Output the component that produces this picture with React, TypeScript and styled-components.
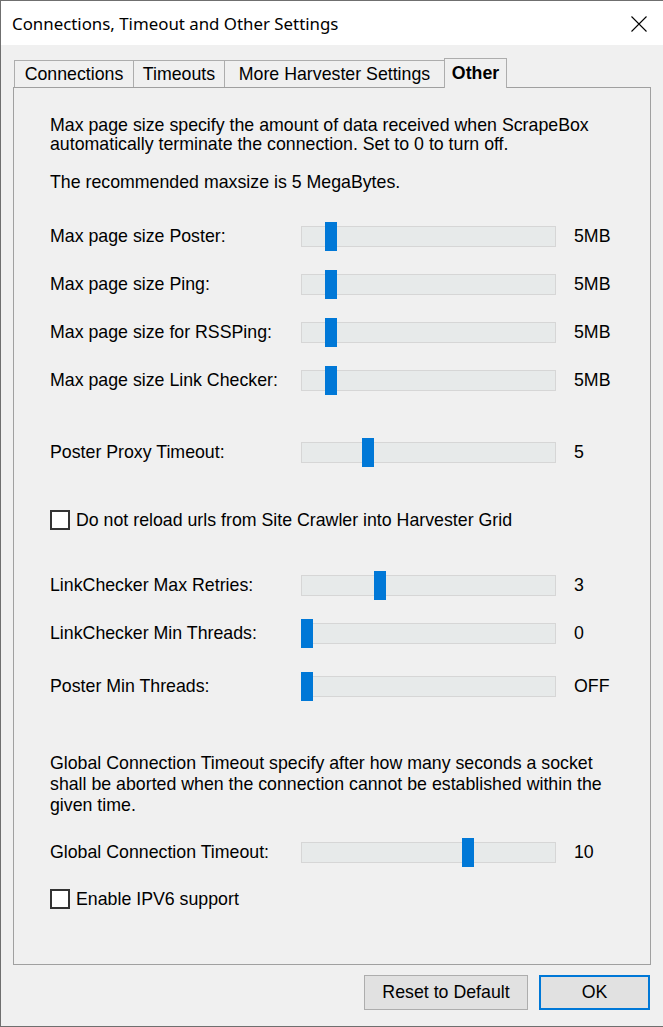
import React from "react";
import styled, { createGlobalStyle, css } from "styled-components";

const Global = createGlobalStyle`
  html, body {
    margin: 0;
    padding: 0;
    background: #f0f0f0;
  }
  * { box-sizing: border-box; }
`;

const UI_FONT = `"Liberation Sans", Arial, sans-serif`;

const Window = styled.div`
  width: 663px;
  height: 1027px;
  display: flex;
  flex-direction: column;
  background: #f0f0f0;
  border-top: 1px solid #6f6f6f;
  border-left: 1px solid #6f6f6f;
  border-bottom: 1px solid #6f6f6f;
  font-family: ${UI_FONT};
  font-size: 17.75px;
  color: #000;
`;

const TitleBar = styled.div`
  height: 44px;
  flex: none;
  background: #fff;
  display: flex;
  align-items: center;
  justify-content: space-between;
  padding: 1px 16px 0 11px;
`;

const Title = styled.div`
  font-family: "Noto Sans", "Open Sans", sans-serif;
  font-size: 16.85px;
  color: #000;
  line-height: 20px;
`;

const CloseButton = styled.div`
  width: 17px;
  height: 17px;
  display: flex;
  align-items: center;
  justify-content: center;
`;

const Body = styled.div`
  flex: 1;
  display: flex;
  flex-direction: column;
  padding: 13px 12px 0 12px;
`;

const TabStrip = styled.div`
  display: flex;
  align-items: flex-end;
  height: 29px;
  padding-left: 1px;
  position: relative;
  z-index: 1;
`;

const Tab = styled.div<{ $width: number; $active?: boolean }>`
  width: ${(p) => p.$width}px;
  height: 27px;
  margin-left: -1px;
  &:first-child { margin-left: 0; }
  border: 1px solid #adadad;
  border-bottom: none;
  background: #f0f0f0;
  display: flex;
  align-items: center;
  justify-content: center;
  line-height: 20px;
  padding-bottom: 1px;
  ${(p) =>
    p.$active &&
    css`
      height: 30px;
      margin-bottom: -1px;
      font-weight: bold;
      padding-bottom: 2px;
    `}
`;

const Panel = styled.div`
  height: 878px;
  border: 1px solid #a0a0a0;
  background: #f0f0f0;
  padding: 28px 0 0 36px;
  display: flex;
  flex-direction: column;
`;

const Block = styled.div<{ $top?: number }>`
  margin-top: ${(p) => p.$top ?? 0}px;
`;

const Para = styled(Block)<{ $lh?: number }>`
  line-height: ${(p) => p.$lh ?? 21}px;
  width: 560px;
`;

const Row = styled(Block)`
  display: flex;
  align-items: center;
  height: 29px;
`;

const Label = styled.div`
  width: 251px;
  line-height: 21px;
  white-space: nowrap;
`;

const Track = styled.div`
  position: relative;
  width: 255px;
  height: 21px;
  background: #e7eaea;
  border: 1px solid #d6d6d6;
`;

const Thumb = styled.div`
  position: absolute;
  top: -5px;
  width: 12px;
  height: 29px;
  background: #0078d7;
`;

const Value = styled.div`
  margin-left: 18px;
  line-height: 21px;
`;

const CheckRow = styled(Block)`
  display: flex;
  align-items: center;
  height: 20px;
  gap: 6px;
`;

const Box = styled.div`
  width: 20px;
  height: 20px;
  border: 2px solid #333;
  background: #fff;
  flex: none;
`;

const ButtonBar = styled.div`
  display: flex;
  justify-content: flex-end;
  gap: 11px;
  margin-top: 10px;
  padding-right: 1px;
`;

const Button = styled.div<{ $width: number; $primary?: boolean }>`
  width: ${(p) => p.$width}px;
  height: 35px;
  background: #e1e1e1;
  border: 1px solid #adadad;
  display: flex;
  align-items: center;
  justify-content: center;
  line-height: 21px;
  ${(p) =>
    p.$primary &&
    css`
      border: 2px solid #0078d7;
    `}
`;

type SliderProps = { label: string; value: string; offset: number; top: number };

const SliderRow = ({ label, value, offset, top }: SliderProps) => (
  <Row $top={top}>
    <Label>{label}</Label>
    <Track>
      <Thumb style={{ left: offset - 1 }} />
    </Track>
    <Value>{value}</Value>
  </Row>
);

const CloseIcon = () => (
  <svg width="16" height="16" viewBox="0 0 16 16">
    <path d="M0.5 0.5 L15.5 15.5 M15.5 0.5 L0.5 15.5" stroke="#000" strokeWidth="1.1" fill="none" />
  </svg>
);

export default function App() {
  return (
    <>
      <Global />
      <Window>
        <TitleBar>
          <Title>Connections, Timeout and Other Settings</Title>
          <CloseButton>
            <CloseIcon />
          </CloseButton>
        </TitleBar>
        <Body>
          <TabStrip>
            <Tab $width={120}>Connections</Tab>
            <Tab $width={92}>Timeouts</Tab>
            <Tab $width={221}>More Harvester Settings</Tab>
            <Tab $width={63} $active>
              Other
            </Tab>
          </TabStrip>
          <Panel>
            <Para $lh={19}>
              Max page size specify the amount of data received when ScrapeBox automatically terminate the
              connection. Set to 0 to turn off.
            </Para>
            <Para $top={18}>The recommended maxsize is 5 MegaBytes.</Para>
            <SliderRow top={29} label="Max page size Poster:" value="5MB" offset={24} />
            <SliderRow top={19} label="Max page size Ping:" value="5MB" offset={24} />
            <SliderRow top={19} label="Max page size for RSSPing:" value="5MB" offset={24} />
            <SliderRow top={19} label="Max page size Link Checker:" value="5MB" offset={24} />
            <SliderRow top={43} label="Poster Proxy Timeout:" value="5" offset={61} />
            <CheckRow $top={43}>
              <Box />
              <span>Do not reload urls from Site Crawler into Harvester Grid</span>
            </CheckRow>
            <SliderRow top={41} label="LinkChecker Max Retries:" value="3" offset={73} />
            <SliderRow top={19} label="LinkChecker Min Threads:" value="0" offset={0} />
            <SliderRow top={24} label="Poster Min Threads:" value="OFF" offset={0} />
            <Para $top={52}>
              Global Connection Timeout specify after how many seconds a socket shall be aborted when the
              connection cannot be established within the given time.
            </Para>
            <SliderRow top={22} label="Global Connection Timeout:" value="10" offset={161} />
            <CheckRow $top={22}>
              <Box />
              <span>Enable IPV6 support</span>
            </CheckRow>
          </Panel>
          <ButtonBar>
            <Button $width={164}>Reset to Default</Button>
            <Button $width={111} $primary>
              OK
            </Button>
          </ButtonBar>
        </Body>
      </Window>
    </>
  );
}
